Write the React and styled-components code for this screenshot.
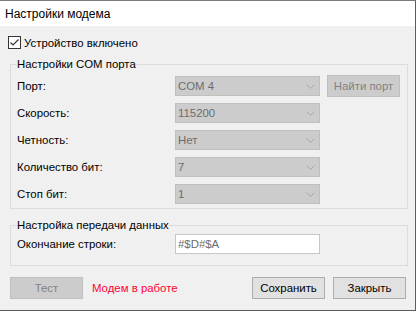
import React from "react";
import styled, { createGlobalStyle } from "styled-components";

const Global = createGlobalStyle`
  html, body { margin: 0; padding: 0; background: #ffffff; }
  body { font-family: "Liberation Sans", Arial, sans-serif; }
  * { box-sizing: border-box; }
`;

const Window = styled.div`
  width: 416px;
  height: 311px;
  border-top: 1px solid #7a7a7a;
  border-right: 1px solid #5c5c5c;
  border-bottom: 1px solid #5c5c5c;
  display: flex;
  flex-direction: column;
  font-size: 11.4px;
  color: #000;
`;

const TitleBar = styled.div`
  height: 25px;
  background: #ffffff;
  display: flex;
  align-items: center;
  padding-left: 5px;
  font-size: 12px;
  color: #000;
`;

const Body = styled.div`
  flex: 1;
  background: #f0f0f0;
  padding: 10px 7px 0 8px;
  display: flex;
  flex-direction: column;
`;

const CheckRow = styled.label`
  display: flex;
  align-items: center;
  gap: 3px;
  height: 13px;
  line-height: 14px;
`;

const CheckBox = styled.span`
  width: 13px;
  height: 13px;
  border: 1px solid #333333;
  background: #ffffff;
  display: inline-flex;
  align-items: center;
  justify-content: center;
`;

const Group = styled.fieldset`
  margin: ${(p) => p.$top}px 0 0 2px;
  border: 1px solid #dcdcdc;
  padding: ${(p) => p.$pt}px 6px ${(p) => p.$pb}px 6px;
  min-inline-size: 0;
`;

const Legend = styled.legend`
  padding: 0;
  font-size: 11.4px;
  line-height: 14px;
`;

const FormGrid = styled.div`
  display: grid;
  grid-template-columns: 151px 145px 73px;
  column-gap: 7px;
  row-gap: 7px;
  align-items: center;
`;

const Label = styled.div`
  line-height: 14px;
`;

const Combo = styled.div`
  height: 20px;
  background: #cccccc;
  border: 1px solid #bfbfbf;
  color: #6d6d6d;
  display: flex;
  align-items: center;
  justify-content: space-between;
  padding: 0 4px 0 2px;
  line-height: 14px;
`;

const TextField = styled.div`
  height: 20px;
  background: #ffffff;
  border: 1px solid #c6c6c6;
  color: #6d6d6d;
  display: flex;
  align-items: center;
  padding: 0 2px;
  line-height: 14px;
`;

const Button = styled.div`
  width: 73px;
  height: 22px;
  display: flex;
  align-items: center;
  justify-content: center;
  line-height: 14px;
  white-space: nowrap;
  border: 1px solid ${(p) => (p.$disabled ? "#bfbfbf" : "#adadad")};
  background: ${(p) => (p.$disabled ? "#cccccc" : "#e1e1e1")};
  color: ${(p) => (p.$disabled ? "#838383" : "#000000")};
  margin: ${(p) => p.$margin || "0"};
`;

const ButtonRow = styled.div`
  display: flex;
  align-items: center;
  margin: 11px 2px 0 2px;
  gap: 8px;
`;

const Status = styled.div`
  color: #ff0033;
  margin-left: 1px;
  flex: 1;
  line-height: 14px;
`;

const Chevron = () => (
  <svg width="9" height="5" viewBox="0 0 9 5">
    <path d="M0.5 0.5 L4.5 4.5 L8.5 0.5" fill="none" stroke="#a8a8a8" strokeWidth="1" />
  </svg>
);

const ComboBox = ({ value }) => (
  <Combo>
    <span>{value}</span>
    <Chevron />
  </Combo>
);

const rows = [
  ["Порт:", "COM 4"],
  ["Скорость:", "115200"],
  ["Четность:", "Нет"],
  ["Количество бит:", "7"],
  ["Стоп бит:", "1"],
];

export default function App() {
  return (
    <>
      <Global />
      <Window>
        <TitleBar>Настройки модема</TitleBar>
        <Body>
          <CheckRow>
            <CheckBox>
              <svg width="11" height="11" viewBox="0 0 11 11">
                <path d="M1.5 5.5 L4 8 L9.5 2.5" fill="none" stroke="#333" strokeWidth="1.2" />
              </svg>
            </CheckBox>
            <span>Устройство включено</span>
          </CheckRow>
          <Group $top={8} $pt={5} $pb={4}>
            <Legend>Настройки COM порта</Legend>
            <FormGrid>
              {rows.map(([label, value], i) => (
                <React.Fragment key={label}>
                  <Label>{label}</Label>
                  <ComboBox value={value} />
                  {i === 0 ? (
                    <Button $disabled $margin="-1px 0">Найти порт</Button>
                  ) : (
                    <span />
                  )}
                </React.Fragment>
              ))}
            </FormGrid>
          </Group>
          <Group $top={9} $pt={2} $pb={11}>
            <Legend>Настройка передачи данных</Legend>
            <FormGrid>
              <Label>Окончание строки:</Label>
              <TextField>#$D#$A</TextField>
              <span />
            </FormGrid>
          </Group>
          <ButtonRow>
            <Button $disabled>Тест</Button>
            <Status>Модем в работе</Status>
            <Button>Сохранить</Button>
            <Button>Закрыть</Button>
          </ButtonRow>
        </Body>
      </Window>
    </>
  );
}
